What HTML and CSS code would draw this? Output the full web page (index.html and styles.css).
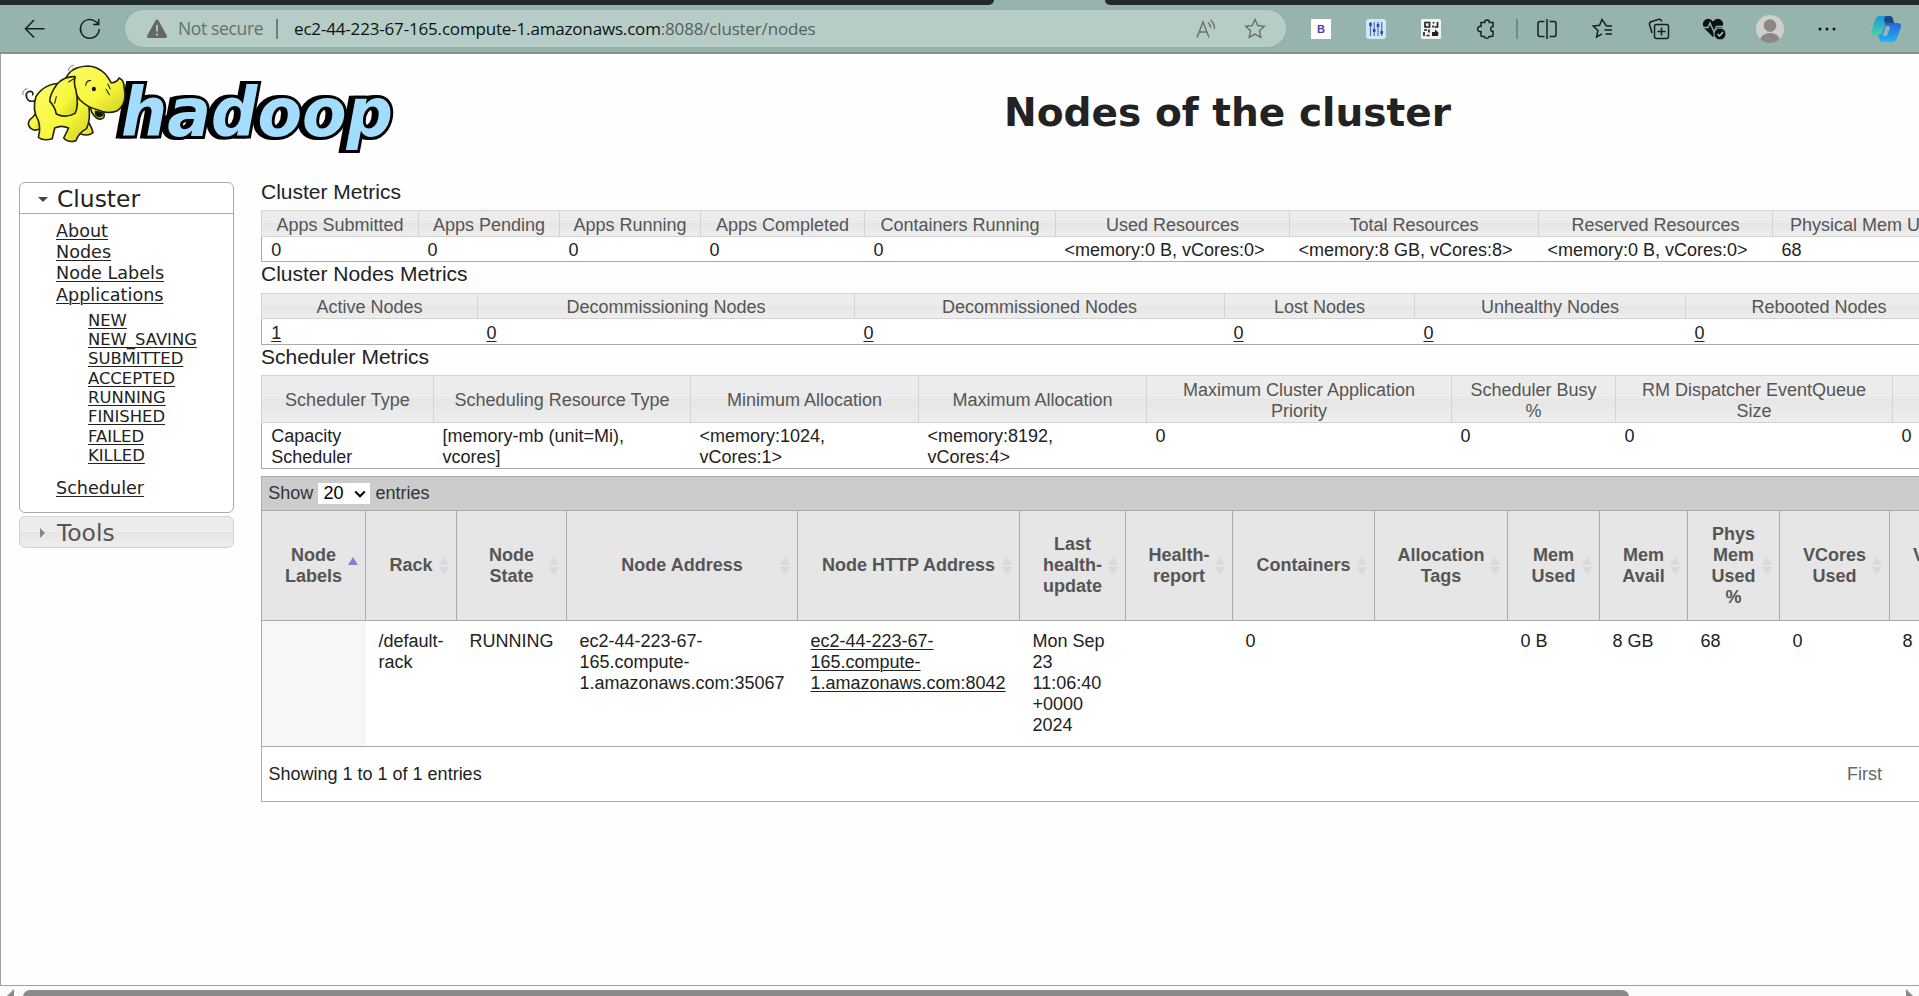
FILE: index.html
```html
<!DOCTYPE html>
<html lang="en">
<head>
<meta charset="utf-8">
<title>Nodes of the cluster</title>
<link rel="stylesheet" href="styles.css">
</head>
<body>
<div class="tabstrip"><span class="tab-dark tab-left"></span><span class="tab-dark tab-right"></span></div>
<div class="toolbar">
  <svg class="nav-back" width="22" height="20" viewBox="0 0 22 20"><path d="M10 1 1.5 9.7 10 18.5M1.5 9.7H20.5" class="line"/></svg>
  <svg class="nav-reload" width="22" height="22" viewBox="0 0 22 22"><path d="M20.2 11a9.4 9.4 0 1 1-3.2-7.2L19.5 6.2M19.7 1v5.6h-5.6" class="line"/></svg>
  <div class="address">
    <svg class="warn" width="22" height="20" viewBox="0 0 22 20"><path d="M9.5 1.4Q11 -.6 12.5 1.4L20.8 16.6Q21.6 19 19.2 19H2.8Q.4 19 1.2 16.6Z" fill="#666"/><path d="M11 6v6.5M11 14.6v2" stroke="#b6ccc7" stroke-width="1.8"/></svg>
    <span class="not-secure">Not secure</span>
    <span class="bar"></span>
    <span class="url">ec2-44-223-67-165.compute-1.amazonaws.com<span class="url-path">:8088/cluster/nodes</span></span>
    <svg class="read" width="20" height="20" viewBox="0 0 20 20"><path d="M1 18.5 7 3l6 15.500M3.200 13h7.600M12 3.500q2.500 2 2.500 5.200M14.500 1q4 3.500 4 9" class="gray"/></svg>
    <svg class="star" width="22" height="21" viewBox="0 0 22 21"><path d="m11 1.500 2.800 6 6.500.8-4.800 4.500 1.300 6.500-5.800-3.200-5.800 3.200 1.300-6.500L1.700 8.300l6.500-.8Z" class="gray"/></svg>
  </div>
  <div class="tools">
    <span class="slot w55"><span class="ext-b">B</span></span>
    <span class="slot w55"><svg width="20" height="20" viewBox="0 0 20 20"><rect width="20" height="20" rx="3" fill="#cfe8f8"/><path d="M4.500 3v14M8.200 3v14M12 3v14M15.700 3v14" stroke="#5668c0" stroke-width="1.200"/><path d="M4.500 4v3M8.200 10v3M12 5v3M15.700 12v3" stroke="#3344a8" stroke-width="2.600"/></svg></span>
    <span class="slot w55"><svg width="20" height="20" viewBox="0 0 20 20"><rect width="20" height="20" rx="1.500" fill="#f3f3f3"/><path d="M4 3.500h4.500V8H4ZM12.500 3v1.500M16.500 3v5h-3M12 6.500v2M3 11h3M8 10.500v3M3 13v4M5.500 16.500h3" fill="none" stroke="#222" stroke-width="1.700"/><path d="M11 13h3v-2.500l3.500 3-.5 3.500h-6Z" fill="#222"/></svg></span>
    <span class="slot w55"><svg width="21" height="22" viewBox="0 0 21 22"><path d="M5 4.500h3.600a2.400 2.400 0 0 1 4.800 0H17v4.200q-2.300-.4-2.300 2.300t2.300 2.300v4.300q0 1-1 1h-3a2.400 2.400 0 0 1-4.600 0H6q-1 0-1-1v-4a2.700 2.700 0 1 1 0-5.200Z" class="line"/></svg></span>
    <span class="slot w7"><span class="tool-sep"></span></span>
    <span class="slot w54 split"><svg width="20" height="22" viewBox="0 0 20 22"><path d="M7.500 3.500H3q-2 0-2 2v11q0 2 2 2h4.500M12.500 3.500H17q2 0 2 2v11q0 2-2 2h-4.500M10 1v20" class="line"/></svg></span>
    <span class="slot w56"><svg width="22" height="21" viewBox="0 0 22 21"><path d="M20 8h-5.500L10 1.500 7.500 7.200 1.200 8l4.700 4.500L4.600 19 10 15.800M12.500 12H20M13.500 16H20" class="line"/></svg></span>
    <span class="slot w56"><svg width="22" height="22" viewBox="0 0 22 22"><path d="M8.500 6.500h10q2 0 2 2v10q0 2-2 2h-10q-2 0-2-2v-10q0-2 2-2ZM13.500 9.500v8M9.500 13.500h8M4 15 1.500 6.500q-.4-2 1.500-2.800L11 1.200q2-.4 3 2.300" class="line"/></svg></span>
    <span class="slot w55"><svg width="24" height="22" viewBox="0 0 24 22"><path d="M11 19 2 10Q-1 4.500 3.500 1.500 8-.5 11 3.500 14-.5 18.500 1.500 23 4.500 20 10Z" fill="#0b1110"/><path d="M0 9.500h6L8 5l4 9 2.500-5.500H21" fill="none" stroke="#97b3ae" stroke-width="1.400"/><circle cx="18" cy="16" r="6" fill="#0b1110" stroke="#97b3ae"/><path d="m15.500 16 2 2 3.500-4" fill="none" stroke="#c5d6d3" stroke-width="1.300"/></svg></span>
    <span class="slot w57"><svg width="28" height="28" viewBox="0 0 28 28"><defs><clipPath id="av"><circle cx="14" cy="14" r="14"/></clipPath></defs><g clip-path="url(#av)"><rect width="28" height="28" fill="#d1cfcd"/><circle cx="14" cy="10.500" r="6.300" fill="#8b8784"/><ellipse cx="14" cy="26" rx="10" ry="8" fill="#8b8784"/></g></svg></span>
    <span class="slot w57"><svg width="18" height="4" viewBox="0 0 18 4"><g fill="#111"><circle cx="2" cy="2" r="1.500"/><circle cx="9" cy="2" r="1.500"/><circle cx="16" cy="2" r="1.500"/></g></svg></span>
    <span class="slot w61"><svg width="32" height="28" viewBox="0 0 32 28"><defs><linearGradient id="ca" x1="0" y1="0" x2="0" y2="1"><stop offset="0" stop-color="#1598d8"/><stop offset="1" stop-color="#50d4a2"/></linearGradient><linearGradient id="cb" x1="0" y1="0" x2="0" y2="1"><stop offset="0" stop-color="#2763dc"/><stop offset="1" stop-color="#1fb6f5"/></linearGradient></defs><path d="M10 1h9q3 0 3.500 3L24 8h-5q-3 0-4 3l-3 8q-1 2-3 2H4q-4 0-3-4.500L5.500 4Q6.500 1 10 1Z" fill="url(#ca)"/><path d="M17 1h3q2.500 0 3 3l1 4h-5q-2 0-3 2l-2-5q0-4 3-4Z" fill="#164a8c"/><path d="M22 27h-9q-3 0-3.500-3L8 20q3 .5 4-2l3-8q1-2 4-2h8q5 0 4 4.500L26.500 24q-1 3-4.500 3Z" fill="url(#cb)"/><path d="m15.500 11h3q2 0 1.200 2.500l-2 6q-.5 1.500-2 1.500h-3.200Z" fill="#97b3ae"/></svg></span>
  </div>
</div>

<div class="page">
  <header class="head">
    <svg class="logo" width="380" height="110" viewBox="18 60 380 110" role="img">
      <text x="121" y="136" textLength="272" lengthAdjust="spacingAndGlyphs" class="word">hadoop</text>
      <defs><linearGradient id="el" x1="0" y1="0" x2="1" y2="1"><stop offset="0" stop-color="#fbfb6a"/><stop offset=".6" stop-color="#f7f73c"/><stop offset="1" stop-color="#cfcf22"/></linearGradient></defs>
      <g transform="scale(.40816 .33333)" class="ele">
        <path d="M85 302Q72 308 66 295 61 278 73 274 83 274 80 284"/>
        <path d="M92 330Q84 350 74 358 64 372 76 386 88 396 100 384Z" fill="url(#el)"/>
        <path d="M205 350Q222 370 228 398 216 410 198 402L186 370Z" fill="url(#el)"/>
        <path d="M160 250Q110 246 88 290 78 330 94 362 100 385 94 412 108 424 128 416L134 384Q150 374 168 384 162 400 156 414 168 430 186 422 192 400 212 386 222 360 218 320Z" fill="url(#el)"/>
        <path d="M160 240Q170 200 216 198 254 202 272 248 284 250 292 234 304 240 304 262 312 310 288 332 262 344 240 330 214 322 196 300Z" fill="url(#el)"/>
        <path d="M222 326Q228 352 244 358 260 356 254 338" fill="url(#el)"/>
        <path d="M234 334q-2 14 10 16 10-2 6-12Z" fill="#111"/>
        <path d="M184 230Q158 228 140 252 122 282 122 304 134 318 138 342 160 356 184 340 194 316 186 270 180 248 184 230Z" fill="url(#el)"/>
        <path d="M210 256q2-16 12-14M264 252l6 14M260 268l8 16M138 290l-4 20M184 234l-16 12" class="crease"/>
        <ellipse cx="230" cy="267" rx="5" ry="7" fill="#111"/>
        <path d="M168 212q0-14 12-16M174 214q2-8 8-10M56 284q-2-14 10-18M62 288q0-12 6-14" class="motion"/>
      </g>
    </svg>
    <h1 class="title">Nodes of the cluster</h1>
  </header>
  <div class="columns">
    <nav class="side">
      <section class="panel">
        <h3 class="panel-head"><i class="tri-down"></i>Cluster</h3>
        <ul class="menu">
          <li><a>About</a></li><li><a>Nodes</a></li><li><a>Node Labels</a></li><li class="apps"><a>Applications</a>
            <ul class="sub"><li><a>NEW</a></li><li><a>NEW_SAVING</a></li><li><a>SUBMITTED</a></li><li><a>ACCEPTED</a></li><li><a>RUNNING</a></li><li><a>FINISHED</a></li><li><a>FAILED</a></li><li><a>KILLED</a></li></ul></li>
          <li><a>Scheduler</a></li>
        </ul>
      </section>
      <h3 class="panel-closed"><i class="tri-right"></i>Tools</h3>
    </nav>
    <main class="main">
      <h2 class="cap">Cluster Metrics</h2>
      <table class="metrics t1">
        <colgroup><col class="c158"><col class="c141"><col class="c141"><col class="c164"><col class="c191"><col class="c234"><col class="c249"><col class="c234"><col class="c215"></colgroup>
        <tr><th>Apps Submitted</th><th>Apps Pending</th><th>Apps Running</th><th>Apps Completed</th><th>Containers Running</th><th>Used Resources</th><th>Total Resources</th><th>Reserved Resources</th><th>Physical Mem Used %</th></tr>
        <tr><td>0</td><td>0</td><td>0</td><td>0</td><td>0</td><td>&lt;memory:0 B, vCores:0&gt;</td><td>&lt;memory:8 GB, vCores:8&gt;</td><td>&lt;memory:0 B, vCores:0&gt;</td><td>68</td></tr>
      </table>
      <h2 class="cap cap-nodes">Cluster Nodes Metrics</h2>
      <table class="metrics t2">
        <colgroup><col class="c217"><col class="c377"><col class="c370"><col class="c190"><col class="c271"><col class="c267"></colgroup>
        <tr><th>Active Nodes</th><th>Decommissioning Nodes</th><th>Decommissioned Nodes</th><th>Lost Nodes</th><th>Unhealthy Nodes</th><th>Rebooted Nodes</th></tr>
        <tr><td><a>1</a></td><td><a>0</a></td><td><a>0</a></td><td><a>0</a></td><td><a>0</a></td><td><a>0</a></td></tr>
      </table>
      <h2 class="cap">Scheduler Metrics</h2>
      <table class="metrics t3">
        <colgroup><col class="c173"><col class="c257"><col class="c228"><col class="c228"><col class="c305"><col class="c164"><col class="c277"><col class="c203"></colgroup>
        <tr><th class="mid">Scheduler Type</th><th class="mid">Scheduling Resource Type</th><th class="mid">Minimum Allocation</th><th class="mid">Maximum Allocation</th><th>Maximum Cluster Application<br>Priority</th><th>Scheduler Busy<br>%</th><th>RM Dispatcher EventQueue<br>Size</th><th></th></tr>
        <tr><td>Capacity<br>Scheduler</td><td>[memory-mb (unit=Mi),<br>vcores]</td><td>&lt;memory:1024,<br>vCores:1&gt;</td><td>&lt;memory:8192,<br>vCores:4&gt;</td><td>0</td><td>0</td><td>0</td><td>0</td></tr>
      </table>
      <div class="grid-wrap">
        <div class="grid-bar"><span>Show</span><span class="select">20<svg width="12" height="8" viewBox="0 0 12 8"><path d="m1.200 1.500 4.800 4.700 4.800-4.700" fill="none" stroke="#000" stroke-width="2.200"/></svg></span><span>entries</span></div>
        <table class="nodes">
          <colgroup><col class="c104"><col class="c91"><col class="c110"><col class="c231"><col class="c222"><col class="c106"><col class="c107"><col class="c142"><col class="c133"><col class="c92"><col class="c88"><col class="c92"><col class="c110"><col class="c110"></colgroup>
          <tr><th class="asc">Node<br>Labels</th><th>Rack</th><th>Node<br>State</th><th>Node Address</th><th>Node HTTP Address</th><th>Last<br>health-<br>update</th><th>Health-<br>report</th><th>Containers</th><th>Allocation<br>Tags</th><th>Mem<br>Used</th><th>Mem<br>Avail</th><th>Phys<br>Mem<br>Used<br>%</th><th>VCores<br>Used</th><th>VCores<br>Avail</th></tr>
          <tr><td class="sorted"></td><td>/default-<br>rack</td><td>RUNNING</td><td>ec2-44-223-67-<br>165.compute-<br>1.amazonaws.com:35067</td><td><a>ec2-44-223-67-<br>165.compute-<br>1.amazonaws.com:8042</a></td><td>Mon Sep<br>23<br>11:06:40<br>+0000<br>2024</td><td></td><td>0</td><td></td><td>0 B</td><td>8 GB</td><td>68</td><td>0</td><td>8</td></tr>
        </table>
        <div class="grid-info"><span>Showing 1 to 1 of 1 entries</span><span class="first">First</span></div>
      </div>
    </main>
  </div>
</div>
<div class="scroll"><svg width="9" height="9" viewBox="0 0 9 9"><path d="M8 0v9H-1Z" fill="#8a8a8a"/></svg><span class="thumb"></span><svg width="9" height="9" viewBox="0 0 9 9"><path d="M0 0v9h9Z" fill="#8a8a8a"/></svg></div>
</body>
</html>
```

FILE: styles.css
```css
* { box-sizing: border-box; }
body { margin: 0; width: 1919px; height: 996px; overflow: hidden; background: #fefefe; color: #222; font: 18px/21px "Liberation Sans", Arial, sans-serif; }
h1, h2, h3, ul { margin: 0; padding: 0; font-weight: normal; }
ul { list-style: none; }
a { text-decoration: underline; text-underline-offset: 2px; text-decoration-thickness: 1px; }
svg { display: block; flex: none; overflow: visible; }

/* browser chrome */
.tabstrip { display: flex; justify-content: space-between; height: 5px; background: #97b3ae; }
.tab-dark { background: #232b2a; }
.tab-left { width: 994px; border-bottom-right-radius: 5px; }
.tab-right { width: 814px; border-bottom-left-radius: 5px; }
.toolbar { display: flex; align-items: center; height: 49px; background: #97b3ae; border-bottom: 2px solid #87918f; font-family: "Open Sans", "Noto Sans", sans-serif; }
.line { fill: none; stroke: #15201e; stroke-width: 1.5; }
.gray { fill: none; stroke: #64716e; stroke-width: 1.4; }
.nav-back { margin-left: 24px; }
.nav-reload { margin-left: 33px; }
.address { display: flex; align-items: center; width: 1161px; height: 37px; margin-left: 24px; padding-left: 21px; border-radius: 19px; background: #b6ccc7; box-shadow: 0 0 3px #8eaaa5; }
.not-secure { width: 84px; margin-left: 10px; color: #65706e; font-size: 17.5px; white-space: nowrap; letter-spacing: -.35px; }
.bar { width: 2px; height: 20px; margin: 0 16px 0 14px; background: #6e7d7a; }
.url { flex: 1; color: #0c1211; font-size: 17px; letter-spacing: -.17px; white-space: nowrap; }
.url-path { color: #55605e; }
.read { margin-right: 28px; }
.star { margin-right: 20px; }
.tools { display: flex; align-items: center; margin-left: 7.500px; height: 40px; }
.slot { display: flex; justify-content: center; align-items: center; }
.split { padding-right: 1px; }
.w7 { width: 7px; } .w54 { width: 54px; } .w55 { width: 55px; } .w56 { width: 56px; } .w57 { width: 57px; } .w61 { width: 61px; }
.ext-b { width: 20px; height: 20px; background: #fff; color: #4a3fb0; font: bold 11px/20px "Liberation Sans", sans-serif; text-align: center; }
.tool-sep { width: 2px; height: 20px; background: #748985; }

/* page */
.page { height: 932px; border-left: 1px solid #a0a0a0; border-bottom: 1px solid #a0a0a0; overflow: hidden; }
.head { display: flex; height: 126px; }
.logo { margin: 6px 0 0 17px; }
.word { font: italic bold 68px "DejaVu Sans", sans-serif; fill: #a3dcfc; stroke: #000; stroke-width: 6px; paint-order: stroke; filter: drop-shadow(-4px 0 0 #000); }
.ele path { stroke: #222208; stroke-width: 1.6px; vector-effect: non-scaling-stroke; fill: none; stroke-linejoin: round; stroke-linecap: round; }
.ele path[fill="url(#el)"] { fill: url(#el); }
.ele path[fill="#111"] { fill: #111; }
.ele .crease { stroke-width: 1.1px; }
.ele .motion { stroke-width: 1px; stroke: #777; }
.title { margin: 35px 0 0 606px; font: bold 39.1px/48px "DejaVu Sans", Verdana, sans-serif; white-space: nowrap; }
.columns { display: flex; align-items: flex-start; }
.side { width: 215px; flex: none; margin: 2px 27px 0 18px; font-family: "DejaVu Sans", Verdana, sans-serif; }
.panel { height: 331px; border: 1px solid #aaa; border-radius: 6px; background: #fff; }
.panel-head, .panel-closed { display: flex; align-items: center; font-size: 23.4px; line-height: 30px; }
.panel-head { height: 31px; border-bottom: 1px solid #aaa; padding: 2px 0 0 18px; }
.panel-closed { height: 32px; margin-top: 3px; padding: 1px 0 0 20px; border: 1px solid #d3d3d3; border-radius: 6px; background: linear-gradient(#ececec 0 50%, #e5e5e5 50%, #eee); color: #555; }
.tri-down { border: 5px solid transparent; border-top-color: #444; border-bottom: 0; margin-right: 9px; }
.tri-right { border: 5px solid transparent; border-left-color: #888; border-right: 0; margin-right: 12px; }
.menu { padding: 7px 0 0 36px; font-size: 17.6px; line-height: 21.2px; }
.menu .sub { padding: 5px 0 13px 32px; font-size: 16.4px; line-height: 19.3px; }
.main { flex: none; width: 1738px; }
.cap { height: 24px; margin-bottom: 6px; font-size: 21px; line-height: 24px; }
.cap-nodes { margin-bottom: 7px; }

table { table-layout: fixed; border-collapse: separate; border-spacing: 0; white-space: nowrap; }
.t1 { width: 1727px; } .t2 { width: 1692px; } .t3 { width: 1835px; }
.metrics th, .metrics td { vertical-align: top; font-weight: normal; }
.metrics th { padding: 4px 0 0; border: solid #d3d3d3; border-width: 1px 1px 1px 0; background: linear-gradient(#ececec 0 50%, #e5e5e5 50%, #eee); color: #555; text-align: center; }
.metrics td { padding: 3px 0 0 8.5px; border-bottom: 1px solid #aaa; text-align: left; background: #fff; }
.metrics th:first-child { border-left-width: 1px; }
.metrics td:first-child { border-left: 1px solid #aaa; padding-left: 9.2px; }
.metrics th.mid { vertical-align: middle; padding: 3px 0 0; }
.t1 th { height: 27px; } .t1 td { height: 25px; }
.t2 th { height: 26px; padding-top: 3px; } .t2 td { height: 26px; padding-top: 4px; }
.t3 th { height: 48px; } .t3 td { height: 46px; }

.grid-wrap { width: 1739px; margin-top: 7px; border-left: 1px solid #aaa; }
.grid-bar { display: flex; align-items: center; gap: 5.2px; height: 34px; padding-left: 6.2px; border-top: 1px solid #aaa; background: #ccc; color: #333; }
.select { display: flex; align-items: center; justify-content: space-between; width: 52px; height: 21px; padding: 0 4px 0 5px; background: #fff; color: #000; }
.nodes { width: 1738px; }
.nodes th { position: relative; height: 111px; padding: 0; border: solid #aaa; border-width: 1px 1px 1px 0; background: #e6e6e6; color: #555; font-weight: bold; text-align: center; vertical-align: middle; }
.nodes th::before, .nodes th::after { content: ""; position: absolute; right: 7px; border: 5px solid transparent; }
.nodes th::before { top: 46px; border-bottom: 8px solid #d9d9db; border-top: 0; }
.nodes th::after { top: 56px; border-top: 8px solid #d9d9db; border-bottom: 0; }
.nodes th.asc::before { border-bottom-color: #8082d8; }
.nodes th.asc::after { display: none; }
.nodes td { height: 126px; padding: 10px 0 0 12.500px; border-bottom: 1px solid #aaa; background: #fff; vertical-align: top; }
.nodes td.sorted { background: #f7f7f7; }
.grid-info { display: flex; justify-content: space-between; height: 55px; padding: 17px 0 0 6.5px; border-bottom: 1px solid #aaa; background: #fff; }
.first { width: 153px; color: #666; }

.c88 { width: 88px; } .c91 { width: 91px; } .c92 { width: 92px; } .c104 { width: 104px; } .c106 { width: 106px; } .c107 { width: 107px; } .c110 { width: 110px; } .c133 { width: 133px; } .c141 { width: 141px; } .c142 { width: 142px; } .c158 { width: 158px; } .c164 { width: 164px; } .c173 { width: 173px; } .c190 { width: 190px; } .c191 { width: 191px; } .c203 { width: 203px; } .c215 { width: 215px; } .c217 { width: 217px; } .c222 { width: 222px; } .c228 { width: 228px; } .c231 { width: 231px; } .c234 { width: 234px; } .c249 { width: 249px; } .c257 { width: 257px; } .c267 { width: 267px; } .c271 { width: 271px; } .c277 { width: 277px; } .c305 { width: 305px; } .c370 { width: 370px; } .c377 { width: 377px; }

/* horizontal scrollbar */
.scroll { display: flex; height: 10px; padding: 3px 0 0 6px; background: #fbfbfb; }
.thumb { width: 1606px; height: 16px; margin: 1px 277px 0 8px; flex: none; border-radius: 7px; background: #8a8a8a; }
```
